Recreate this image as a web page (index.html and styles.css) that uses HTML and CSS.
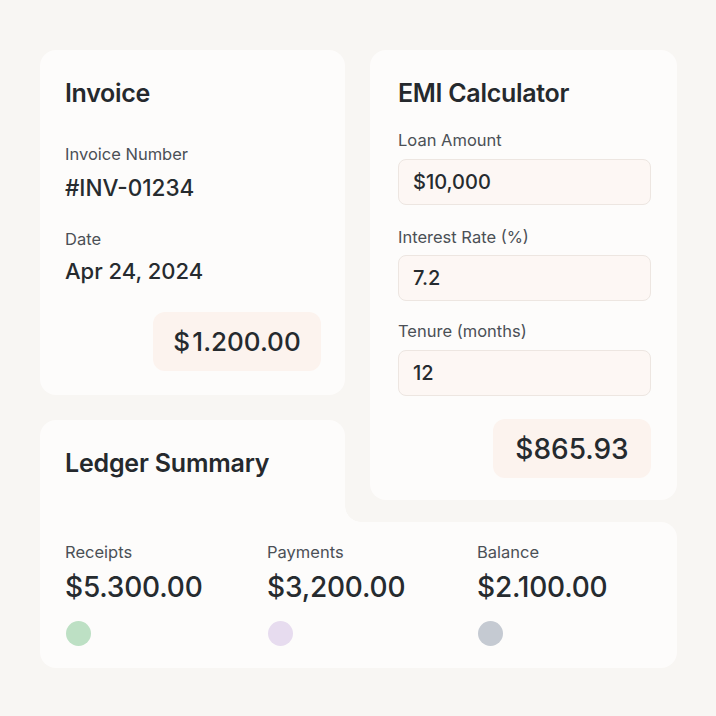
FILE: index.html
```html
<!DOCTYPE html>
<html>
<head>
<meta charset="utf-8">
<link rel="stylesheet" href="styles.css">
</head>
<body>
<div class="page">
  <div class="top">
    <div class="left">
      <section class="card invoice">
        <h2 class="title">Invoice</h2>
        <div class="label lbl-first">Invoice Number</div>
        <div class="value">#INV-01234</div>
        <div class="label lbl-date">Date</div>
        <div class="value value-date">Apr 24, 2024</div>
        <div class="badge badge-invoice">$&#8202;1.200.00</div>
      </section>
      <section class="ledger-head">
        <h2 class="title">Ledger Summary</h2>
      </section>
    </div>
    <section class="card emi">
      <h2 class="title">EMI Calculator</h2>
      <div class="label f1">Loan Amount</div>
      <div class="field">$10,000</div>
      <div class="label f2">Interest Rate (%)</div>
      <div class="field field-b">7.2</div>
      <div class="label f3">Tenure (months)</div>
      <div class="field">12</div>
      <div class="badge badge-emi">$865.93</div>
    </section>
  </div>
  <section class="ledger-body">
    <div class="stat">
      <div class="label">Receipts</div>
      <div class="big">$5.300.00</div>
      <span class="dot dot-green"></span>
    </div>
    <div class="stat">
      <div class="label">Payments</div>
      <div class="big">$3,200.00</div>
      <span class="dot dot-purple"></span>
    </div>
    <div class="stat">
      <div class="label">Balance</div>
      <div class="big">$2.100.00</div>
      <span class="dot dot-grey"></span>
    </div>
  </section>
</div>
</body>
</html>
```

FILE: styles.css
```css
* { box-sizing: border-box; }
html, body {
  margin: 0;
  padding: 0;
  background: #f8f6f3;
  font-family: Inter, "Noto Sans", sans-serif;
  color: #262b2f;
}
.page {
  width: 716px;
  height: 716px;
  padding: 50px 39px 0 40px;
}
.top {
  display: flex;
  gap: 25px;
}
.left {
  width: 305px;
  display: flex;
  flex-direction: column;
  gap: 25px;
}
.card {
  background: #fdfcfb;
  border-radius: 16px;
  display: flex;
  flex-direction: column;
}
.title {
  margin: 0;
  font-size: 25px;
  line-height: 32px;
  font-weight: 600;
  color: #25292d;
  letter-spacing: -0.3px;
}
.label {
  font-size: 16.5px;
  line-height: 20px;
  color: #4b5056;
  font-weight: 400;
}
.value {
  font-size: 22.5px;
  line-height: 28px;
  font-weight: 500;
  color: #262b2f;
  margin-top: 10px;
}
.invoice {
  height: 345px;
  padding: 27px 24px 24px 25px;
}
.lbl-first { margin-top: 35px; }
.lbl-date { margin-top: 27px; }
.value-date { font-size: 22px; margin-top: 8px; }
.badge {
  align-self: flex-end;
  background: #fcf3ee;
  border-radius: 12px;
  height: 59px;
  display: flex;
  align-items: center;
  justify-content: center;
  font-weight: 500;
  color: #252a2e;
}
.badge-invoice {
  width: 168px;
  margin-top: 27px;
  font-size: 26px;
}
.ledger-head {
  flex: 1;
  position: relative;
  background: #fdfcfb;
  border-radius: 16px 16px 0 0;
  padding: 27px 25px 0 25px;
}
.ledger-head .title { font-size: 25px; letter-spacing: -0.2px; }
.ledger-head::after {
  content: "";
  position: absolute;
  right: -16px;
  bottom: 0;
  width: 16px;
  height: 16px;
  background: radial-gradient(circle at 100% 0, rgba(253,252,251,0) 15.5px, #fdfcfb 16px);
}
.emi {
  width: 307px;
  height: 450px;
  margin-bottom: 22px;
  padding: 27px 26px 22px 28px;
}
.f1 { margin-top: 21px; }
.f2 { margin-top: 22px; }
.f3 { margin-top: 20px; }
.field {
  margin-top: 9px;
  height: 46px;
  border: 1px solid #ede6e1;
  background: #fdf7f4;
  border-radius: 8px;
  padding-left: 14px;
  display: flex;
  align-items: center;
  font-size: 20px;
  font-weight: 500;
  color: #262b2f;
}
.field-b { margin-top: 8px; }
.badge-emi {
  width: 158px;
  margin-top: 23px;
  font-size: 28px;
}
.ledger-body {
  background: #fdfcfb;
  border-radius: 0 16px 16px 16px;
  height: 146px;
  padding: 20px 25px 22px 25px;
  display: grid;
  grid-template-columns: 202px 210px 1fr;
}
.stat {
  display: flex;
  flex-direction: column;
  align-items: flex-start;
}
.big {
  margin-top: 8px;
  font-size: 28px;
  line-height: 34px;
  font-weight: 500;
  color: #262b2f;
  letter-spacing: -0.2px;
}
.dot {
  margin-top: 17px;
  margin-left: 1px;
  width: 25px;
  height: 25px;
  border-radius: 50%;
  display: block;
}
.dot-green { background: #bde0c4; }
.dot-purple { background: #e7dcef; }
.dot-grey { background: #c5cad2; }
```
